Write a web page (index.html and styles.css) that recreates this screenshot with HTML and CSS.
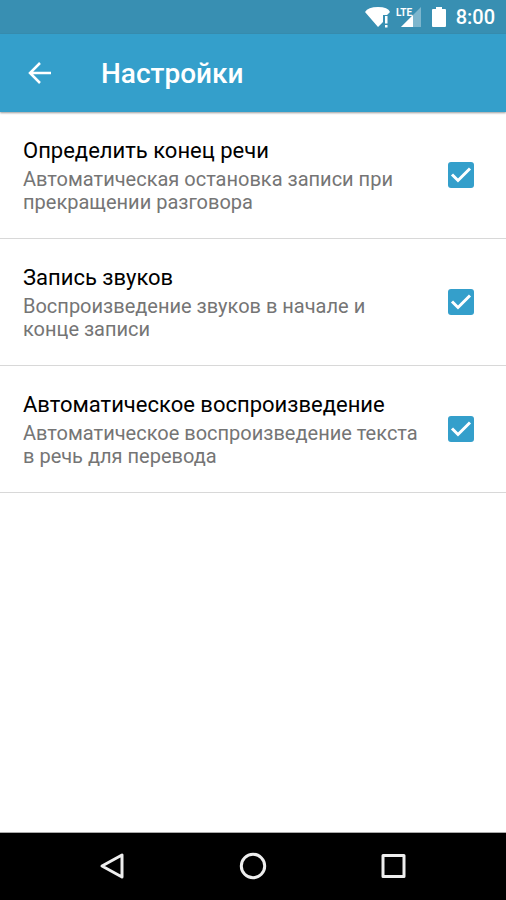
FILE: index.html
```html
<!DOCTYPE html>
<html lang="ru">
<head>
<meta charset="utf-8">
<meta name="viewport" content="width=device-width, initial-scale=1">
<title>Настройки</title>
<link rel="stylesheet" href="styles.css">
</head>
<body>
<div class="status-bar">
  <svg class="status-wifi" viewBox="0 0 26 22" aria-hidden="true"><path d="M0 6Q3 1 13 1T25 6L22 9H18V16L13 21Z" fill="#fff"/><path d="M20 10h2.5v7.500h-2.500zM20 19h2.500v2.500h-2.500z" fill="#fff"/></svg>
  <svg class="status-signal" viewBox="0 0 25 22" aria-hidden="true"><path d="M25 1V21H5Z" fill="#fff" opacity=".35"/><path d="M17 9V21H5Z" fill="#fff"/><text class="lte" x="0" y="10">LTE</text></svg>
  <svg class="status-battery" viewBox="0 0 14 20" aria-hidden="true"><path d="M4 0h6v2h3q1 0 1 1v16q0 1-1 1H1q-1 0-1-1V3q0-1 1-1h3z" fill="#fff"/></svg>
  <time>8:00</time>
</div>
<header class="app-bar">
  <button class="back" type="button" aria-label="Назад"><svg viewBox="0 0 30 30" fill="none" stroke="#fff" stroke-width="2.500"><path d="M27 15H6M16 5L6 15L16 25"/></svg></button>
  <h1>Настройки</h1>
</header>
<main>
  <label class="setting">
    <span class="copy"><span class="title">Определить конец речи</span><span class="summary">Автоматическая остановка записи при прекращении разговора</span></span>
    <span class="check"><input type="checkbox" checked><svg viewBox="0 0 26 26" aria-hidden="true"><path d="M4 12.5l6 6l12-12"/></svg></span>
  </label>
  <label class="setting">
    <span class="copy"><span class="title">Запись звуков</span><span class="summary">Воспроизведение звуков в начале и конце записи</span></span>
    <span class="check"><input type="checkbox" checked><svg viewBox="0 0 26 26" aria-hidden="true"><path d="M4 12.5l6 6l12-12"/></svg></span>
  </label>
  <label class="setting">
    <span class="copy"><span class="title">Автоматическое воспроизведение</span><span class="summary">Автоматическое воспроизведение текста в речь для перевода</span></span>
    <span class="check"><input type="checkbox" checked><svg viewBox="0 0 26 26" aria-hidden="true"><path d="M4 12.5l6 6l12-12"/></svg></span>
  </label>
</main>
<nav class="nav-bar">
  <button type="button" aria-label="Назад"><svg viewBox="0 0 30 30"><path d="M24 3V25L4 14Z"/></svg></button>
  <button type="button" aria-label="Домой"><svg viewBox="0 0 30 30"><circle cx="15" cy="14" r="11.7"/></svg></button>
  <button type="button" aria-label="Обзор"><svg viewBox="0 0 30 30"><rect x="5" y="3.5" width="21" height="21"/></svg></button>
</nav>
</body>
</html>
```
FILE: styles.css
```css
* { box-sizing: border-box; }
body { margin: 0; min-height: 100vh; display: flex; flex-direction: column; background: #fff; font-family: Roboto, sans-serif; }
button { border: 0; padding: 0; background: none; }
svg { display: block; }
.status-bar { height: 34px; padding: 0 11px; display: flex; justify-content: flex-end; align-items: center; background: #388fb2; color: #fff; font-size: 20px; font-weight: 500; }
.app-bar { height: 78px; padding: 0 24px; display: flex; align-items: center; gap: 47px; background: #349fcb; box-shadow: 0 1px 2px rgba(0, 0, 0, .4); color: #fff; }
.back svg { width: 30px; height: 30px; }
h1 { margin: 0; font-size: 28px; font-weight: 500; }
main { flex: 1; }
.status-wifi { width: 26px; height: 22px; margin-right: 5px; }
.status-signal { width: 25px; height: 22px; margin-right: 11px; }
.status-battery { width: 14px; height: 20px; margin-right: 10px; }
.lte { font: 700 10px "Liberation Sans Narrow", Roboto, sans-serif; fill: #fff; }
.setting { display: flex; align-items: center; justify-content: space-between; gap: 26px; padding: 24px 32px 24px 23px; border-bottom: 1px solid #d8d8d8; }
.title, .summary { display: block; }
.title { margin-bottom: 2px; font-size: 22px; line-height: 30px; color: #000; }
.summary { font-size: 20px; line-height: 23px; color: #757575; }
.check { display: grid; flex: none; }
.check > * { grid-area: 1 / 1; width: 26px; height: 26px; }
.check input { appearance: none; margin: 0; border: 2px solid #757575; border-radius: 3px; }
.check input:checked { border: 0; background: #349fcb; }
.check svg { visibility: hidden; fill: none; stroke: #fff; stroke-width: 3; pointer-events: none; }
.check input:checked + svg { visibility: visible; z-index: 1; }
.nav-bar { height: 68px; display: flex; justify-content: center; align-items: center; gap: 110px; border-top: 1px solid #aaa; background: #000; }
.nav-bar svg { width: 30px; height: 30px; fill: none; stroke: #eee; stroke-width: 3; stroke-linejoin: round; }
```
